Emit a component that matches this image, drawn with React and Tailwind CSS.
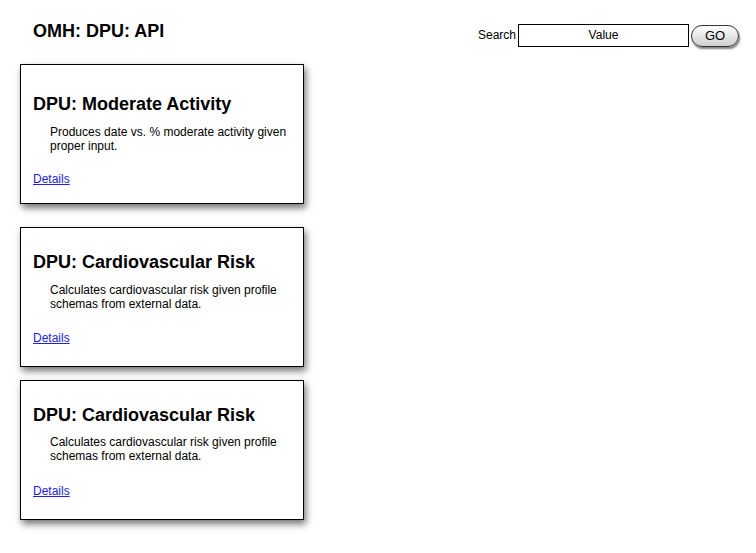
const services = [
	{
		title: "DPU: Moderate Activity",
		description: "Produces date vs. % moderate activity given proper input.",
		pad: "pt-[28px]",
		gap: "mt-[10px]",
		link: "mt-[19px]",
		top: "mt-[23px]",
	},
	{
		title: "DPU: Cardiovascular Risk",
		description: "Calculates cardiovascular risk given profile schemas from external data.",
		pad: "pt-[23px]",
		gap: "mt-[10px]",
		link: "mt-[20px]",
		top: "mt-[23px]",
	},
	{
		title: "DPU: Cardiovascular Risk",
		description: "Calculates cardiovascular risk given profile schemas from external data.",
		pad: "pt-[23px]",
		gap: "mt-[9px]",
		link: "mt-[21px]",
		top: "mt-[13px]",
	},
];

const ServiceCard = ({ service, first }) => (
	<div
		className={`${first ? "" : service.top} w-[284px] h-[140px] border border-black bg-white ${service.pad} pl-[12px] shadow-[2px_4px_7px_rgba(0,0,0,0.55)]`}>
		<h2 className="text-[18px] leading-[22px] font-bold text-black">{service.title}</h2>
		<p className={`${service.gap} ml-[17px] w-[245px] text-[12px] leading-[14px] text-black`}>{service.description}</p>
		<a href="#" className={`block ${service.link} text-[12px] leading-[15px] text-[#2222dd] underline`}>
			Details
		</a>
	</div>
);

const App = () => {
	return (
		<div className="w-[756px] h-[553px] bg-white overflow-hidden" style={{ fontFamily: '"Liberation Sans", Arial, sans-serif' }}>
			<div className="flex justify-between items-start">
				<h1 className="ml-[33px] mt-[20px] text-[18px] leading-[22px] font-bold text-black">OMH: DPU: API</h1>
				<div className="flex items-center mt-[23px] mr-[17px]">
					<span className="text-[12px] text-black mr-[2px]">Search</span>
					<input
						type="text"
						defaultValue="Value"
						className="w-[171px] h-[23px] border border-black text-center text-[12px] text-black outline-none"
					/>
					<button className="ml-[2px] mt-[2px] w-[48px] h-[22px] rounded-full border border-[#333] bg-gradient-to-b from-white to-[#cfcfcf] text-[13px] text-black shadow-[1px_2px_2px_rgba(0,0,0,0.5)]">
						GO
					</button>
				</div>
			</div>
			<div className="ml-[20px] mt-[17px] flex flex-col">
				{services.map((service, i) => (
					<ServiceCard key={i} service={service} first={i === 0} />
				))}
			</div>
		</div>
	);
};

export default App;
